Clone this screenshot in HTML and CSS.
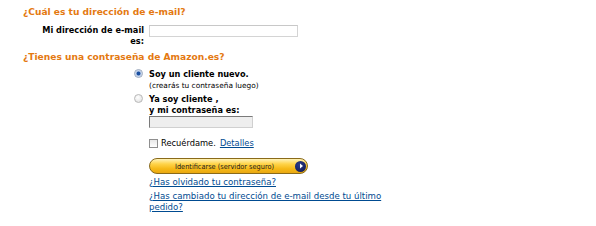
FILE: index.html
```html
<!DOCTYPE html>
<html>
<head>
<meta charset="utf-8">
<link rel="stylesheet" href="styles.css">
</head>
<body>
<div class="page">
  <h2 class="title t1">¿Cuál es tu dirección de e-mail?</h2>
  <div class="row email-row">
    <label class="lbl">Mi dirección de e-mail<br>es:</label>
    <div class="field"><input class="email" type="text"></div>
  </div>
  <h2 class="title t2">¿Tienes una contraseña de Amazon.es?</h2>
  <div class="row opt opt1">
    <div class="rcol"><span class="radio checked"></span></div>
    <div class="field">
      <div class="strong">Soy un cliente nuevo.</div>
      <div class="small">(crearás tu contraseña luego)</div>
    </div>
  </div>
  <div class="row opt opt2">
    <div class="rcol"><span class="radio"></span></div>
    <div class="field">
      <div class="strong">Ya soy cliente ,<br>y mi contraseña es:</div>
      <div class="pwd"></div>
      <div class="remember"><span class="check"></span><span class="rtext">Recuérdame.</span> <a class="link" href="#">Detalles</a></div>
      <div class="btn"><span class="btn-text">Identificarse (servidor seguro)</span><span class="btn-arrow"><svg width="10" height="10" viewBox="0 0 10 10"><path d="M4 2.5 L7 5 L4 7.5 Z" fill="#fff"/></svg></span></div>
      <div class="links">
        <a class="link" href="#">¿Has olvidado tu contraseña?</a>
        <a class="link" href="#">¿Has cambiado tu dirección de e-mail desde tu último pedido?</a>
      </div>
    </div>
  </div>
</div>
</body>
</html>
```
FILE: styles.css
```css
html, body { margin: 0; padding: 0; background: #fff; }
body { font-family: "DejaVu Sans", Verdana, sans-serif; color: #000; }
.page { padding: 6px 0 0 23px; width: 362px; }
.title { margin: 0; font-size: 9.1px; font-weight: bold; color: #e47911; line-height: 13px; }
.t2 { margin-top: 4px; }
.row { display: grid; grid-template-columns: 121px 1fr; column-gap: 5px; }
.email-row { margin-top: 6px; }
.lbl { text-align: right; font-weight: bold; font-size: 8.2px; line-height: 11px; }
.email { box-sizing: border-box; width: 149px; height: 12px; border: 1px solid #d4d4d4; border-top-color: #c8c8c8; padding: 0; margin: 0; display: block; }
.field { min-width: 0; }
.rcol { display: flex; justify-content: flex-end; padding-right: 1px; }
.radio { box-sizing: border-box; width: 9px; height: 9px; border-radius: 50%; border: 1px solid #b8b8b8; background: radial-gradient(circle at 40% 35%, #ffffff, #dcdcdc); margin-top: 0px; }
.radio.checked { background: radial-gradient(circle at 50% 50%, #1a4fa0 0 1.6px, #9fb7dc 2.2px, #e6eefa 3.6px); border-color: #9aa8bd; }
.opt1 { margin-top: 5px; }
.opt2 { margin-top: 3px; }
.strong { font-weight: bold; font-size: 8.2px; line-height: 11px; }
.small { font-size: 7.4px; line-height: 11px; color: #000; }
.pwd { box-sizing: border-box; width: 104px; height: 12px; margin-top: 0; background: #eeeeee; border: 1px solid #d0d0d0; border-top-color: #7a7a7a; border-left-color: #7a7a7a; }
.remember { margin-top: 10px; display: flex; align-items: center; font-size: 8.3px; line-height: 11px; }
.check { box-sizing: border-box; width: 9px; height: 9px; border: 1px solid #8f8f8f; background: linear-gradient(#e8e8e8, #ffffff); margin-right: 3px; }
.rtext { margin-right: 4px; }
.link { color: #004b91; text-decoration: underline; font-size: 8.6px; }
.remember .link { font-size: 8.3px; }
.btn { box-sizing: border-box; margin-top: 9px; width: 159px; height: 16px; border-radius: 8px; border: 1px solid #8a6a1a; background: linear-gradient(#fff3b8 0%, #ffd44a 35%, #f6b916 70%, #e9a812 100%); display: flex; align-items: center; justify-content: space-between; padding: 0 1px 0 25px; }
.btn-text { font-family: "DejaVu Sans", sans-serif; font-stretch: condensed; font-size: 7.3px; color: #1a1a1a; white-space: nowrap; }
.btn-arrow { width: 11px; height: 11px; border-radius: 50%; background: radial-gradient(circle at 40% 35%, #2a3a8a, #0d164e); display: flex; align-items: center; justify-content: center; }
.links { margin-top: 3px; display: flex; flex-direction: column; gap: 3px; line-height: 11px; }
```
